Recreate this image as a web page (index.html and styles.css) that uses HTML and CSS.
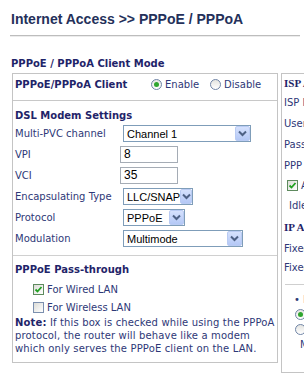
FILE: index.html
```html
<!DOCTYPE html>
<html lang="en">
  <head>
    <meta charset="UTF-8" />
    <meta name="viewport" content="width=device-width, initial-scale=1.0" />
    <title>PPPoE / PPPoA</title>
    <link rel="stylesheet" href="styles.css">
  </head>
  <body>
    <h1 class="title">Internet Access &gt;&gt; PPPoE / PPPoA</h1>
    <h2 class="mode">PPPoE / PPPoA Client Mode</h2>

    <div class="panels">
      <div class="panel panel-left">
        <div class="client-row">
          <span class="client-label">PPPoE/PPPoA Client</span>
          <span class="radio on"></span><span class="radio-text">Enable</span>
          <span class="radio"></span><span class="radio-text">Disable</span>
        </div>

        <div class="settings">
          <h3>DSL Modem Settings</h3>
          <div class="field">
            <label>Multi-PVC channel</label>
            <div class="select w-channel">Channel 1<span class="arrow"><svg width="9" height="7" viewBox="0 0 9 7"><path d="M1 1.5 L4.5 5 L8 1.5" fill="none" stroke="#4d6185" stroke-width="2"/></svg></span></div>
          </div>
          <div class="field">
            <label>VPI</label>
            <div class="input">8</div>
          </div>
          <div class="field">
            <label>VCI</label>
            <div class="input">35</div>
          </div>
          <div class="field">
            <label>Encapsulating Type</label>
            <div class="select w-encap">LLC/SNAP<span class="arrow"><svg width="9" height="7" viewBox="0 0 9 7"><path d="M1 1.5 L4.5 5 L8 1.5" fill="none" stroke="#4d6185" stroke-width="2"/></svg></span></div>
          </div>
          <div class="field">
            <label>Protocol</label>
            <div class="select w-proto">PPPoE<span class="arrow"><svg width="9" height="7" viewBox="0 0 9 7"><path d="M1 1.5 L4.5 5 L8 1.5" fill="none" stroke="#4d6185" stroke-width="2"/></svg></span></div>
          </div>
          <div class="field">
            <label>Modulation</label>
            <div class="select w-mod">Multimode<span class="arrow"><svg width="9" height="7" viewBox="0 0 9 7"><path d="M1 1.5 L4.5 5 L8 1.5" fill="none" stroke="#4d6185" stroke-width="2"/></svg></span></div>
          </div>
        </div>

        <div class="pass">
          <h3>PPPoE Pass-through</h3>
          <div class="check-row first"><span class="check on"><svg width="9" height="9" viewBox="0 0 9 9"><path d="M1.5 4.5 L3.5 6.5 L7.5 2" fill="none" stroke="#21a121" stroke-width="1.8"/></svg></span>For Wired LAN</div>
          <div class="check-row"><span class="check"></span>For Wireless LAN</div>
          <p class="note"><b>Note:</b> If this box is checked while using the PPPoA<br>protocol, the router will behave like a modem<br>which only serves the PPPoE client on the LAN.</p>
        </div>
      </div>

      <div class="panel panel-right">
        <div class="r-head">ISP Access Setup</div>
        <div class="r-row">ISP Name</div>
        <div class="r-row">Username</div>
        <div class="r-row">Password</div>
        <div class="r-row">PPP Authentication</div>
        <div class="r-row r-check"><span class="check on"><svg width="9" height="9" viewBox="0 0 9 9"><path d="M1.5 4.5 L3.5 6.5 L7.5 2" fill="none" stroke="#21a121" stroke-width="1.8"/></svg></span>Always On</div>
        <div class="r-row r-indent">Idle Timeout</div>
        <div class="r-head r-ip">IP Address From ISP</div>
        <div class="r-row r-short">Fixed IP</div>
        <div class="r-row r-short">Fixed IP Address</div>
        <div class="r-line"></div>
        <div class="r-sub">&#8226; Default MAC Address</div>
        <div class="r-radio"><span class="radio on"></span>Default</div>
        <div class="r-radio"><span class="radio"></span>Specify</div>
        <div class="r-mac">MAC</div>
      </div>
    </div>
  </body>
</html>
```

FILE: styles.css
```css
* {
  margin: 0;
  padding: 0;
  box-sizing: border-box;
}

html,
body {
  overflow: hidden;
}

body {
  font-family: "DejaVu Sans", Verdana, sans-serif;
  font-size: 10px;
  color: #2e3877;
  background-color: #fff;
  width: 304px;
  height: 376px;
}

.title {
  font: bold 14px/16px "Liberation Sans", Arial, sans-serif;
  color: #24305a;
  margin: 0 4px 0 10px;
  padding: 11px 1px 8px;
  border-bottom: 1px solid #bdbdbd;
  box-shadow: 0 1px 0 #ececec;
}

.mode {
  font-size: 10px;
  line-height: 14px;
  color: #1f2469;
  margin: 21px 0 2px 11px;
}

.panels {
  display: flex;
  align-items: flex-start;
  gap: 3px;
  margin-left: 12px;
}

.panel {
  flex: none;
  border: 1px solid #c4c4c4;
}

.panel-left {
  width: 266px;
  padding-bottom: 7px;
}

.panel-right {
  width: 200px;
  height: 300px;
  padding-left: 2px;
  white-space: nowrap;
}

/* client row */
.client-row {
  display: flex;
  align-items: center;
  height: 27px;
  padding: 4px 0 9px 2px;
  border-bottom: 1px solid #c8c8c8;
}

.client-label {
  width: 136px;
  font-weight: bold;
  color: #1f2469;
}

.radio {
  display: inline-block;
  width: 11px;
  height: 11px;
  border: 1px solid #6f84a6;
  border-radius: 50%;
  background: linear-gradient(#e4e4e0, #fff);
  position: relative;
  flex: none;
}

.radio.on::after {
  content: "";
  position: absolute;
  left: 2px;
  top: 2px;
  width: 5px;
  height: 5px;
  border-radius: 50%;
  background-color: #2fa52f;
}

.radio-text {
  margin: 0 11px 0 3px;
}

/* settings */
.settings {
  padding: 8px 0 0 2px;
}

h3 {
  font-size: 10px;
  line-height: 14px;
  color: #1f2469;
}

.field {
  display: flex;
  align-items: center;
  height: 21px;
}

.field label {
  width: 105px;
  flex: none;
}

.select {
  display: flex;
  align-items: center;
  justify-content: space-between;
  height: 17px;
  margin-left: 3px;
  padding-left: 3px;
  border: 1px solid #7f9db9;
  font: 11px "Liberation Sans", Arial, sans-serif;
  color: #000;
}

.arrow {
  display: flex;
  align-items: center;
  justify-content: center;
  width: 15px;
  height: 15px;
  border: 1px solid #b9cbf3;
  border-radius: 2px;
  background: linear-gradient(#d5e1fd, #b4c8f6);
}

.w-channel {
  width: 128px;
}

.w-encap {
  width: 70px;
}

.w-proto {
  width: 62px;
}

.w-mod {
  width: 120px;
}

.input {
  width: 58px;
  height: 17px;
  padding: 1px 3px;
  border: 1px solid #a5acb5;
  font: 12px/13px "Liberation Sans", Arial, sans-serif;
  color: #000;
}

/* pass-through */
.pass {
  margin-top: 6px;
  border-top: 1px solid #d0d0d0;
  padding: 7px 0 0 2px;
}

.check-row {
  display: flex;
  align-items: center;
  height: 18px;
  padding-left: 18px;
}

.check-row.first {
  margin-top: 3px;
}

.check {
  display: inline-flex;
  align-items: center;
  justify-content: center;
  width: 11px;
  height: 11px;
  margin-right: 3px;
  border: 1px solid #7b8fae;
  background: linear-gradient(135deg, #dcdcd7, #fff);
  flex: none;
}

.check.on {
  border-color: #5e8a5e;
}

.note {
  line-height: 13px;
  letter-spacing: 0.15px;
  white-space: nowrap;
}

.note b {
  color: #1f2469;
}

/* right panel */
.r-head {
  height: 18px;
  font: bold 11px/18px "Liberation Serif", "Times New Roman", serif;
  color: #1f2469;
}

.r-row {
  height: 21px;
  line-height: 21px;
}

.r-check {
  display: flex;
  align-items: center;
  height: 19px;
  padding-left: 3px;
}

.r-indent {
  padding-left: 5px;
}

.r-ip {
  height: 23px;
  line-height: 23px;
}

.r-short {
  height: 19px;
  line-height: 19px;
}

.r-line {
  margin: 7px 0 0 1px;
  border-top: 1px solid #cfcfcf;
}

.r-sub {
  margin-top: 8px;
  padding-left: 10px;
  line-height: 14px;
}

.r-radio {
  display: flex;
  align-items: center;
  gap: 3px;
  height: 15px;
  padding-left: 11px;
}

.r-radio:first-of-type {
  margin-top: 4px;
}

.r-mac {
  padding-left: 16px;
  line-height: 16px;
}
```
